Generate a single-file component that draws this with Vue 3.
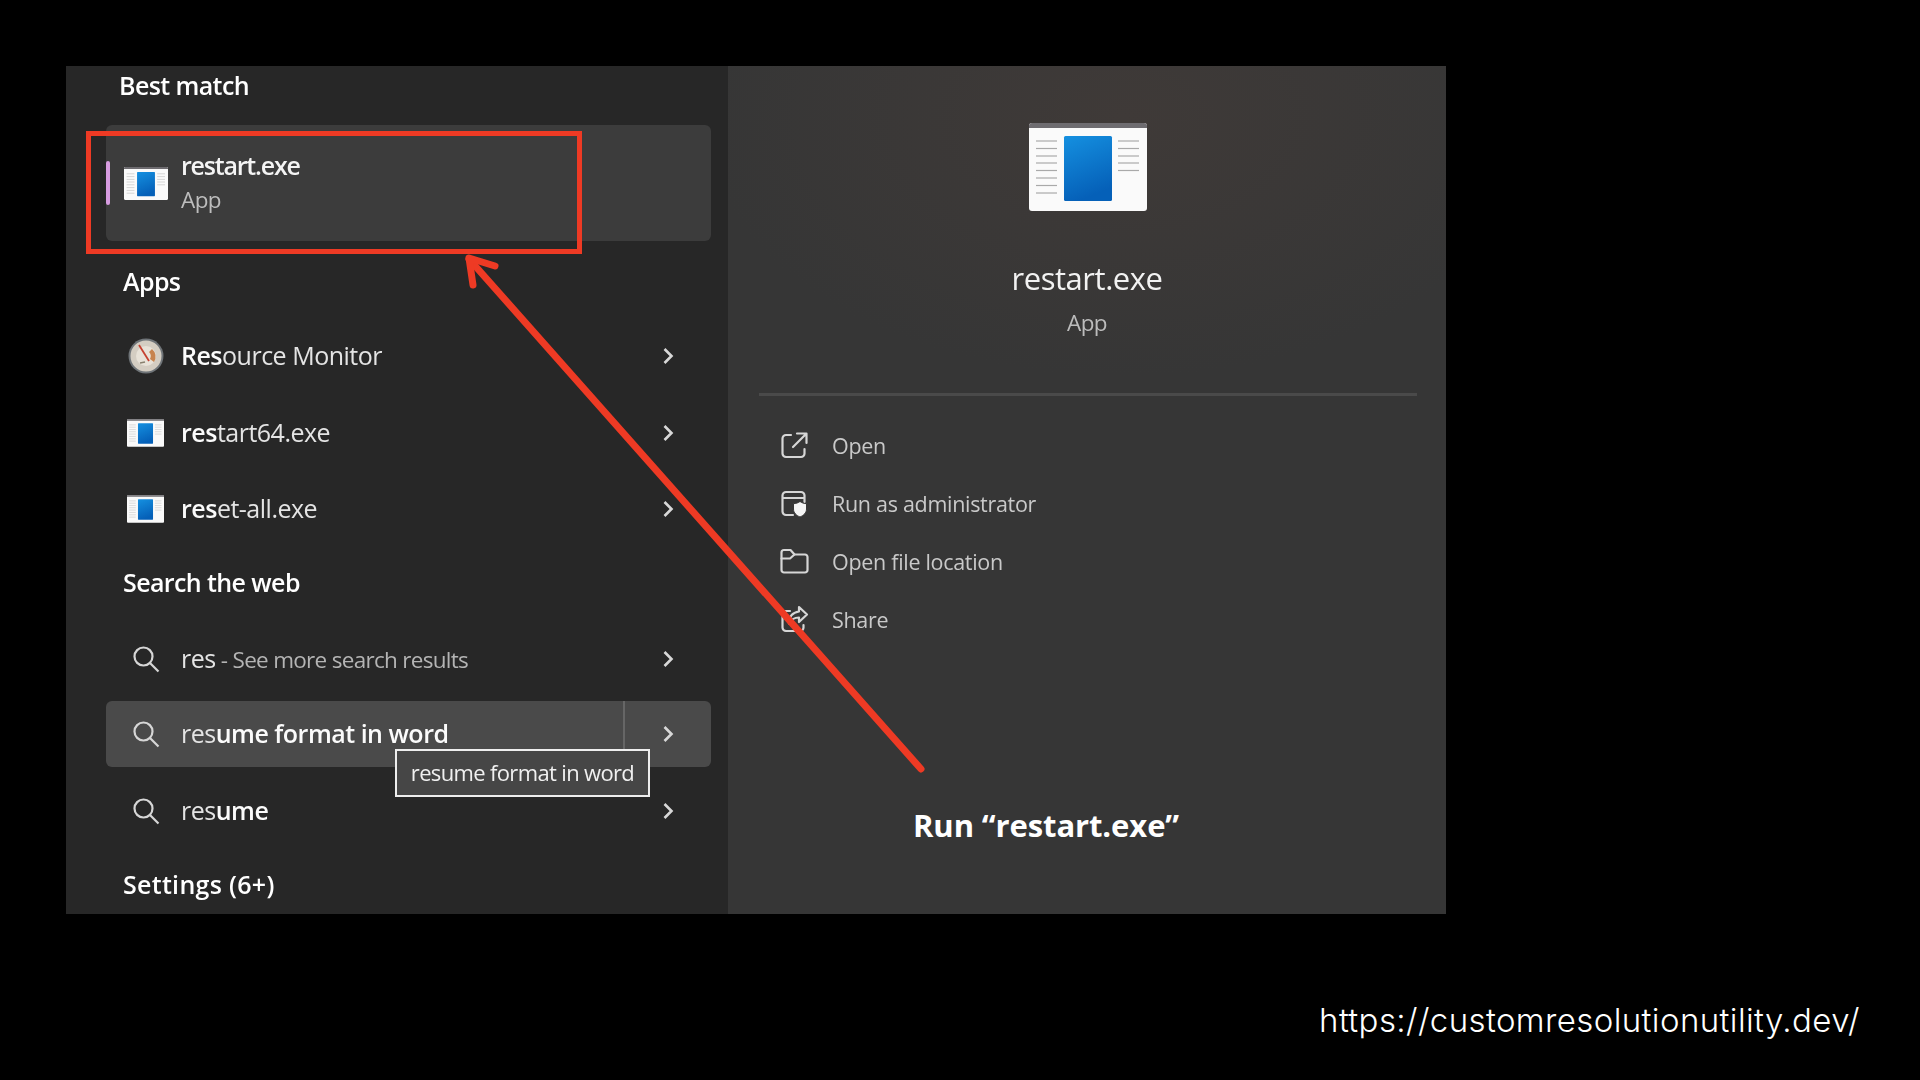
<script setup>
const apps = [
  { icon: 'gauge', pre: 'Res', post: 'ource Monitor' },
  { icon: 'win', pre: 'res', post: 'tart64.exe' },
  { icon: 'win', pre: 'res', post: 'et-all.exe' },
]
const actions = [
  { icon: 'open', label: 'Open' },
  { icon: 'admin', label: 'Run as administrator' },
  { icon: 'folder', label: 'Open file location' },
  { icon: 'share', label: 'Share' },
]
const leftLines = [18, 25.5, 33, 40, 47.5, 55, 62.5, 70]
const rightLines = [18, 25.5, 33, 40, 47.5]
</script>

<template>
  <div class="page">
    <svg width="0" height="0" class="defs">
      <defs>
        <linearGradient id="blue" x1="0" y1="0" x2="0.3" y2="1">
          <stop offset="0" stop-color="#1590e0" />
          <stop offset="1" stop-color="#0560b8" />
        </linearGradient>
        <symbol id="win" viewBox="0 0 118 88">
          <rect x="0" y="0" width="118" height="88" rx="3" fill="#fafafa" />
          <path d="M0 5V3a3 3 0 0 1 3-3h112a3 3 0 0 1 3 3v2z" fill="#6e6c70" />
          <path v-for="y in leftLines" :key="'l' + y" :d="`M7 ${y}H28`" stroke="#a9a9a9" stroke-width="1.2" />
          <path v-for="y in rightLines" :key="'r' + y" :d="`M89 ${y}H110`" stroke="#a9a9a9" stroke-width="1.2" />
          <rect x="35" y="13" width="48" height="65" rx="1.5" fill="url(#blue)" />
        </symbol>
      </defs>
    </svg>

    <main class="panel">
      <section class="left">
        <h2 class="head head-first">Best match</h2>
        <div class="best">
          <span class="accent"></span>
          <span class="icon-col"><svg class="win-best"><use href="#win" /></svg></span>
          <div class="best-text">
            <div class="best-name">restart.exe</div>
            <div class="best-sub">App</div>
          </div>
        </div>

        <h2 class="head head-apps">Apps</h2>
        <div v-for="a in apps" :key="a.post" class="row">
          <span class="icon-col">
            <svg v-if="a.icon === 'win'" class="win-small"><use href="#win" /></svg>
            <svg v-else class="gauge" viewBox="0 0 36 36">
              <circle cx="18" cy="18" r="17.500" fill="#6f7478" />
              <circle cx="18" cy="18" r="15.500" fill="#d4cdc2" />
              <circle cx="18" cy="18" r="10" fill="#e8e2d8" />
              <path d="M24 11a10 10 0 0 1 2 13l-4-3a6 6 0 0 0-1-7z" fill="#c7834e" />
              <path d="M11 7l10 16" stroke="#c5402f" stroke-width="1.8" />
              <path d="M12 25l5-1" stroke="#88806f" stroke-width="1.4" />
            </svg>
          </span>
          <span class="row-text"><b>{{ a.pre }}</b>{{ a.post }}</span>
          <svg class="chev" viewBox="0 0 12 18"><path d="M2.5 2l7 7-7 7" /></svg>
        </div>

        <h2 class="head head-web">Search the web</h2>
        <div class="row">
          <span class="icon-col"><svg class="mag" viewBox="0 0 28 28"><circle cx="11.5" cy="11.5" r="9" /><path d="M18 18l8.500 8.500" /></svg></span>
          <span class="row-text">res<span class="muted"> - See more search results</span></span>
          <svg class="chev" viewBox="0 0 12 18"><path d="M2.5 2l7 7-7 7" /></svg>
        </div>
        <div class="row row-hover">
          <span class="icon-col"><svg class="mag" viewBox="0 0 28 28"><circle cx="11.5" cy="11.5" r="9" /><path d="M18 18l8.500 8.500" /></svg></span>
          <span class="row-text">res<b>ume format in word</b></span>
          <span class="sep"></span>
          <svg class="chev" viewBox="0 0 12 18"><path d="M2.5 2l7 7-7 7" /></svg>
          <div class="tip">resume format in word</div>
        </div>
        <div class="row">
          <span class="icon-col"><svg class="mag" viewBox="0 0 28 28"><circle cx="11.5" cy="11.5" r="9" /><path d="M18 18l8.500 8.500" /></svg></span>
          <span class="row-text">res<b>ume</b></span>
          <svg class="chev" viewBox="0 0 12 18"><path d="M2.5 2l7 7-7 7" /></svg>
        </div>
        <h2 class="head head-settings">Settings (6+)</h2>
      </section>

      <section class="right">
        <svg class="win-large"><use href="#win" /></svg>
        <div class="title">restart.exe</div>
        <div class="sub">App</div>
        <div class="rule"></div>
        <ul class="actions">
          <li v-for="a in actions" :key="a.label" class="action">
            <svg class="act-icon" viewBox="0 0 30 30">
              <template v-if="a.icon === 'open'">
                <path d="M12 5H7a3.500 3.500 0 0 0-3.500 3.500v15A3.500 3.500 0 0 0 7 27h15a3.500 3.500 0 0 0 3.500-3.500V19" />
                <path d="M14 17L27 4M18 3.500h9.500V13" />
              </template>
              <template v-else-if="a.icon === 'admin'">
                <path d="M14 27H7a3.500 3.500 0 0 1-3.500-3.500v-16A3.500 3.500 0 0 1 7 4h15a3.500 3.500 0 0 1 3.500 3.500V14M3.500 10h22" />
                <path class="fill" d="M21 13.500c2 1.500 4 2 6.500 2.200V21c0 4-3 6.500-6.500 8-3.500-1.500-6.500-4-6.500-8v-5.300c2.500-.2 4.500-.7 6.500-2.200z" />
              </template>
              <template v-else-if="a.icon === 'folder'">
                <path d="M2.500 24V6.500A2.500 2.500 0 0 1 5 4h6.500l4 4.500H26a2.500 2.500 0 0 1 2.500 2.500V24a2.500 2.500 0 0 1-2.500 2.500H5A2.500 2.500 0 0 1 2.500 24z" />
                <path d="M2.500 12.500H11l4.500-4" />
              </template>
              <template v-else>
                <path d="M11 7H7a3.500 3.500 0 0 0-3.500 3.500v13A3.500 3.500 0 0 0 7 27h14a3.500 3.500 0 0 0 3.500-3.500V21" />
                <path d="M20 3l8 7.500-8 7.500v-4.500c-5 0-8 2-10 6 0-7 3-11 10-12z" />
              </template>
            </svg>
            <span>{{ a.label }}</span>
          </li>
        </ul>
      </section>

      <div class="caption">Run “restart.exe”</div>
      <div class="redbox"></div>
      <svg class="arrow" viewBox="0 0 480 530">
        <path d="M457 516L5 6" />
        <path d="M9 32L5 5 31 13" />
      </svg>
    </main>

    <footer class="url">https://customresolutionutility.dev/</footer>
  </div>
</template>

<style>
html, body { margin: 0; background: #000; }
</style>

<style scoped>
.page {
  width: 1920px;
  height: 1080px;
  background: #000;
  box-sizing: border-box;
  padding: 66px 0 0 66px;
  display: flex;
  flex-direction: column;
  overflow: hidden;
  font-family: "Open Sans", "Noto Sans", sans-serif;
}
.defs { position: absolute; }
.panel {
  position: relative;
  width: 1380px;
  height: 848px;
  display: flex;
  flex: none;
}
.left {
  width: 662px;
  box-sizing: border-box;
  padding: 0 17px 0 40px;
  background: #272727;
  color: #fff;
  flex: none;
  filter: blur(0.45px);
}
.head {
  margin: 0;
  height: 40px;
  line-height: 38px;
  font-size: 25px;
  font-weight: 600;
  letter-spacing: -0.6px;
  color: #fff;
}
.head-first { margin: 0 0 19px; padding-left: 13px; }
.head-apps { margin: 21px 0 16px; padding-left: 17px; }
.head-web { margin: 15px 0 18px; padding-left: 17px; }
.head-settings { margin: 15px 0 0; padding-left: 17px; letter-spacing: 0.3px; }
.best {
  position: relative;
  height: 116px;
  background: #3c3c3c;
  border-radius: 6px;
  display: flex;
  align-items: center;
}
.accent {
  position: absolute;
  left: 0;
  top: 36px;
  width: 4px;
  height: 44px;
  border-radius: 2px;
  background: #d79ce0;
}
.icon-col {
  width: 75px;
  flex: none;
  display: flex;
  justify-content: center;
  align-items: center;
  padding-left: 4px;
  box-sizing: border-box;
}
.best-text { padding-bottom: 2px; }
.win-best { width: 44px; height: 33px; }
.win-small { width: 37px; height: 28px; }
.gauge { width: 36px; height: 36px; }
.best-name {
  font-size: 25px;
  font-weight: 600;
  line-height: 34px;
  margin-bottom: 2px;
  letter-spacing: -1.2px;
  color: #f4f4f4;
}
.best-sub {
  font-size: 22.5px;
  line-height: 32px;
  letter-spacing: -0.6px;
  color: #bdbdbd;
}
.row {
  position: relative;
  height: 76.5px;
  display: flex;
  align-items: center;
}
.row-text {
  font-size: 25px;
  letter-spacing: -0.5px;
  color: #e4e4e4;
  flex: 1;
  padding-bottom: 2px;
}
.row-text b { font-weight: 600; color: #fbfbfb; }
.muted { font-size: 22.5px; letter-spacing: -0.7px; color: #b4b4b4; }
.chev {
  width: 12px;
  height: 18px;
  margin-right: 37px;
  fill: none;
  stroke: #d8d8d8;
  stroke-width: 2.6;
}
.mag {
  width: 28px;
  height: 28px;
  fill: none;
  stroke: #d6d6d6;
  stroke-width: 2.2;
}
.row-hover {
  height: 66px;
  margin: 4px 0 6px;
  background: #4a4a4a;
  border-radius: 6px;
}
.sep {
  position: absolute;
  left: 517px;
  top: 0;
  bottom: 0;
  width: 2px;
  background: #666;
}
.tip {
  position: absolute;
  left: 289px;
  top: 48px;
  width: 255px;
  height: 48px;
  box-sizing: border-box;
  border: 2px solid #eee;
  background: #464646;
  color: #f0f0f0;
  font-size: 22px;
  letter-spacing: -0.65px;
  line-height: 42px;
  text-align: center;
  z-index: 1;
}
.right {
  flex: 1;
  background:
    radial-gradient(ellipse 420px 260px at 55% 6%, #3f3a38 0%, rgba(63, 58, 56, 0) 100%),
    #363636;
  display: flex;
  flex-direction: column;
  align-items: center;
  position: relative;
  filter: blur(0.45px);
}
.win-large { width: 118px; height: 88px; margin: 57px 0 0 2px; }
.title {
  margin-top: 46px;
  font-size: 31px;
  line-height: 42px;
  letter-spacing: -0.45px;
  color: #f2f2f2;
}
.sub {
  margin-top: 8px;
  font-size: 22.500px;
  line-height: 32px;
  letter-spacing: -0.6px;
  color: #bcbcbc;
}
.rule {
  margin: 54px 0 0 2px;
  width: 658px;
  height: 3px;
  background: #4a4a4a;
  flex: none;
}
.actions {
  list-style: none;
  margin: 20px 0 0;
  padding: 0 0 0 51px;
  width: 100%;
  box-sizing: border-box;
}
.action {
  height: 58px;
  display: flex;
  align-items: center;
  gap: 23px;
  font-size: 21.500px;
  letter-spacing: -0.3px;
  color: #c9c9c9;
}
.act-icon {
  width: 30px;
  height: 30px;
  fill: none;
  stroke: #d6d6d6;
  stroke-width: 2.2;
  stroke-linecap: round;
  stroke-linejoin: round;
}
.act-icon .fill { fill: #f5f5f5; stroke: #363636; stroke-width: 1; }
.caption {
  position: absolute;
  left: 847px;
  top: 739px;
  font-size: 31px;
  font-weight: 700;
  line-height: 40px;
  letter-spacing: -0.1px;
  color: #fff;
  white-space: nowrap;
}
.redbox {
  position: absolute;
  left: 20px;
  top: 65px;
  width: 496px;
  height: 123px;
  box-sizing: border-box;
  border: 5px solid #ee3a24;
}
.arrow {
  position: absolute;
  left: 398px;
  top: 187px;
  width: 480px;
  height: 530px;
  fill: none;
  stroke: #ee3a24;
  stroke-width: 7;
  stroke-linecap: round;
  stroke-linejoin: round;
  overflow: visible;
}
.url {
  align-self: flex-end;
  margin: 84px 60px 0 0;
  font-size: 33px;
  font-weight: 300;
  line-height: 44px;
  letter-spacing: 0.4px;
  color: #fff;
  font-family: "Inter", "Open Sans", sans-serif;
}
</style>
